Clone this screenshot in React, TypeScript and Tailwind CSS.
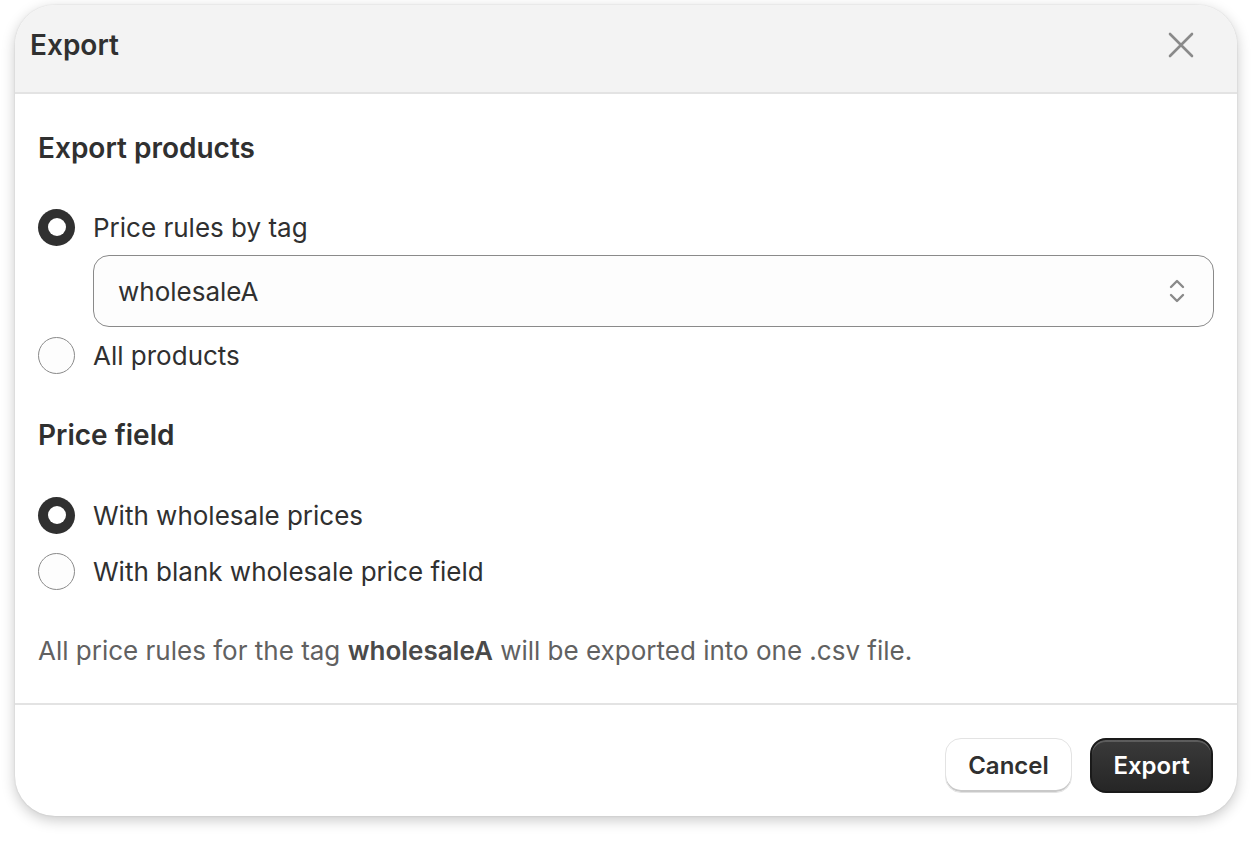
import React from 'react'

function Radio({ checked }: { checked: boolean }) {
  return checked ? (
    <span className="flex h-[37px] w-[37px] shrink-0 items-center justify-center rounded-full bg-[#303030]">
      <span className="h-[18px] w-[18px] rounded-full bg-white" />
    </span>
  ) : (
    <span className="h-[37px] w-[37px] shrink-0 rounded-full border border-[#8a8a8a] bg-[#fdfdfd]" />
  )
}

function Option({ label, checked }: { label: string; checked: boolean }) {
  return (
    <label className="flex h-[56px] items-center gap-[18px]">
      <Radio checked={checked} />
      <span className="text-[26px] text-[#303030]">{label}</span>
    </label>
  )
}

export default function App() {
  return (
    <div
      className="min-h-[841px] bg-white pl-[15px] pt-[5px]"
      style={{ fontFamily: 'Inter, "Noto Sans", sans-serif' }}
    >
      <div className="flex h-[811px] w-[1222px] flex-col overflow-hidden rounded-[40px] bg-white shadow-[0_4px_14px_rgba(0,0,0,0.22),0_0_2px_rgba(0,0,0,0.12)]">
        {/* Header */}
        <div className="flex h-[89px] shrink-0 items-start justify-between border-b-2 border-[#e3e3e3] bg-[#f3f3f3] pl-[15px] pr-[43px] pt-[22px]">
          <h2 className="h-[36px] text-[28px] font-semibold leading-[36px] text-[#303030]">Export</h2>
          <button type="button" className="mt-[5px] text-[#8a8a8a]">
            <svg width="26" height="26" viewBox="0 0 26 26" fill="none" stroke="currentColor" strokeWidth="2.6" strokeLinecap="round">
              <path d="M2 2L24 24M24 2L2 24" />
            </svg>
          </button>
        </div>

        {/* Body */}
        <div className="flex flex-col px-[23px] pb-[34px] pt-[36px]">
          <h3 className="h-[36px] text-[28px] font-semibold leading-[36px] text-[#303030]">Export products</h3>
          <div className="mt-[33px] flex flex-col">
            <Option label="Price rules by tag" checked />
            <div className="ml-[55px] flex h-[72px] items-center justify-between rounded-[16px] border border-[#8a8a8a] bg-[#fdfdfd] pl-[24px] pr-[27px]">
              <span className="text-[26px] text-[#303030]">wholesaleA</span>
              <svg width="18" height="28" viewBox="0 0 18 28" fill="none" stroke="#8a8a8a" strokeWidth="2.4" strokeLinecap="round" strokeLinejoin="round">
                <path d="M3 10L9 4L15 10" />
                <path d="M3 18L9 24L15 18" />
              </svg>
            </div>
            <Option label="All products" checked={false} />
          </div>

          <h3 className="mt-[34px] h-[36px] text-[28px] font-semibold leading-[36px] text-[#303030]">Price field</h3>
          <div className="mt-[34px] flex flex-col">
            <Option label="With wholesale prices" checked />
            <Option label="With blank wholesale price field" checked={false} />
          </div>

          <p className="mt-[34px] h-[36px] text-[26px] leading-[36px] text-[#616161]">
            All price rules for the tag <b className="font-semibold text-[#4a4a4a]">wholesaleA</b> will be exported into one .csv file.
          </p>
        </div>

        {/* Footer */}
        <div className="flex flex-1 items-start justify-end gap-[18px] border-t-2 border-[#e3e3e3] pr-[24px] pt-[33px]">
          <button
            type="button"
            className="h-[55px] w-[127px] rounded-[16px] border border-[#e3e3e3] bg-white text-[24px] font-semibold text-[#303030] shadow-[inset_0_-2px_0_#c9c9c9]"
          >
            Cancel
          </button>
          <button
            type="button"
            className="h-[55px] w-[123px] rounded-[16px] border-2 border-[#1a1a1a] bg-gradient-to-b from-[#3a3a3a] to-[#262626] text-[24px] font-semibold text-white shadow-[inset_0_2px_0_rgba(255,255,255,0.18)]"
          >
            Export
          </button>
        </div>
      </div>
    </div>
  )
}
